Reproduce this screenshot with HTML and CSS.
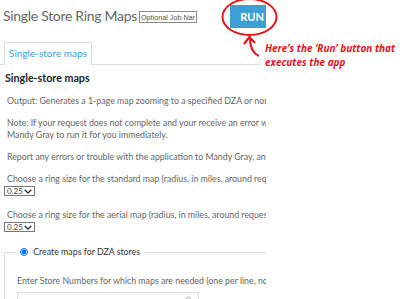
FILE: index.html
```html
<!DOCTYPE html>
<html lang="en">
<head>
    <meta charset="UTF-8">
    <title>Single Store Ring Maps</title>
    <link rel="stylesheet" href="styles.css">
</head>
<body>

<div class="app">
    <div class="app-header">
        <h1 class="app-title">Single Store Ring Maps</h1>
        <input type="text" class="job-name" placeholder="Optional Job Name" />
        <button class="run">RUN</button>
    </div>

    <div class="tabs">
        <div class="tab active">Single-store maps</div>
    </div>

    <div class="panel">
        <h2>Single-store maps</h2>
        <p>Output: Generates a 1-page map zooming to a specified DZA or non-DZA store location.</p>
        <p>Note: If your request does not complete and your receive an error with a reference number, please contact<br>Mandy Gray to run it for you immediately.</p>
        <p>Report any errors or trouble with the application to Mandy Gray, and include a screenshot.</p>
        <p class="label">Choose a ring size for the standard map (radius, in miles, around requested store)</p>
        <div class="ring">
            <select><option>0.25</option></select>
            <svg class="ring-arrow" width="8" height="5" viewBox="0 0 8 5"><path d="M0.7 0.7 L4 4 L7.3 0.7" fill="none" stroke="#333" stroke-width="1.3"/></svg>
        </div>
        <p class="label">Choose a ring size for the aerial map (radius, in miles, around requested store)</p>
        <div class="ring">
            <select><option>0.25</option></select>
            <svg class="ring-arrow" width="8" height="5" viewBox="0 0 8 5"><path d="M0.7 0.7 L4 4 L7.3 0.7" fill="none" stroke="#333" stroke-width="1.3"/></svg>
        </div>

        <fieldset class="stores">
            <legend><label><input type="radio" name="mode" checked /> Create maps for DZA stores</label></legend>
            <p>Enter Store Numbers for which maps are needed (one per line, no commas)</p>
            <div class="store-box">
                <textarea class="store-list"></textarea>
                <svg class="scroll-up" width="7" height="4" viewBox="0 0 7 4"><path d="M0.5 3.5 L3.5 0.7 L6.5 3.5" fill="none" stroke="#aaa" stroke-width="1"/></svg>
            </div>
        </fieldset>
    </div>
</div>

<!-- callout drawn over the screenshot -->
<div class="callout">
    <svg class="callout-mark" width="400" height="70" viewBox="0 0 400 70">
        <ellipse cx="249.5" cy="17" rx="27" ry="18" fill="none" stroke="#e8141c" stroke-width="2"/>
        <path d="M250 38 C250 47 252 53 259 56" fill="none" stroke="#e8141c" stroke-width="2.2"/>
        <path d="M244 44 L249.5 37 L255 43" fill="none" stroke="#e8141c" stroke-width="2.2"/>
    </svg>
    <div class="callout-text">Here’s the ‘Run’ button that<br>executes the app</div>
</div>

</body>
</html>
```

FILE: styles.css
```css
body {
    font-family: 'Lato', sans-serif;
    color: #666;
    background: #fff;
    margin: 0;
    overflow: hidden;
}

.app {
    width: 266px;
    height: 299px;
    overflow: hidden;
}

.app-header {
    display: flex;
    align-items: center;
    height: 31px;
    padding: 0 3px;
    white-space: nowrap;
}

.app-title {
    font-size: 14px;
    font-weight: normal;
    letter-spacing: -0.3px;
    margin: 0 2px 0 0;
}

.job-name {
    flex: none;
    font-family: 'Liberation Sans', Arial, sans-serif;
    font-size: 7.2px;
    width: 54px;
    height: 10px;
    padding: 0 1px;
    border: 1px solid #8a8a8a;
    margin-top: 3px;
}

.job-name::placeholder {
    color: #555;
}

.run {
    flex: none;
    font-family: 'Lato', sans-serif;
    font-weight: bold;
    font-size: 11px;
    color: #fff;
    background-color: #3d9fd4;
    border: none;
    width: 44px;
    height: 23px;
    margin-left: 33px;
    margin-top: 2px;
}

.tabs {
    display: flex;
    width: 256px;
    padding: 11px 0 0 4px;
    border-bottom: 1px solid #ddd;
}

.tab {
    font-size: 10px;
    color: #3aa0d8;
    padding: 4px 4px 5px;
    border: 1px solid #ddd;
    border-bottom: 1px solid #fff;
    margin-bottom: -1px;
    white-space: nowrap;
}

.panel {
    padding: 0 5px;
    width: 600px;
}

.panel h2 {
    font-size: 10.7px;
    line-height: 13px;
    font-weight: bold;
    color: #222;
    margin: 6px 0 11px 0;
}

.panel p {
    font-size: 8.8px;
    line-height: 12px;
    margin: 0 0 10px 2px;
}

.panel p.label {
    margin-bottom: 1px;
}

.ring {
    position: relative;
    width: 31px;
    margin: 0 0 13px -1px;
}

.ring select {
    display: block;
    appearance: none;
    font-family: 'Lato', sans-serif;
    font-size: 8px;
    color: #444;
    width: 31px;
    height: 10px;
    line-height: 8px;
    padding: 0 0 0 2px;
    border: 1px solid #777;
    border-radius: 0;
    background: #fff;
}

.ring-arrow {
    position: absolute;
    right: 3px;
    top: 3px;
}

.stores {
    width: 257px;
    margin: 14px 0 0 -1px;
    padding: 0 0 0 12px;
    border: 1px solid #ddd;
    border-right: none;
    border-bottom: none;
}

.stores legend {
    font-size: 8.8px;
    line-height: 12px;
    color: #333;
    padding: 0 3px;
}

.stores legend input {
    width: 8px;
    height: 8px;
    margin: 0 3px 0 0;
    vertical-align: -1px;
}

.panel .stores p {
    margin: 17px 0 5px 0;
    white-space: nowrap;
}

.store-box {
    position: relative;
    width: 182px;
}

.store-list {
    display: block;
    width: 182px;
    height: 20px;
    box-sizing: border-box;
    border: 1px solid #ddd;
    resize: none;
}

.scroll-up {
    position: absolute;
    right: 7px;
    top: 4px;
}

.callout {
    position: absolute;
    left: 0;
    top: 0;
    width: 400px;
    height: 70px;
}

.callout-mark {
    position: absolute;
    left: 0;
    top: 0;
}

.callout-text {
    position: absolute;
    left: 265px;
    top: 41px;
    font-family: 'Open Sans', sans-serif;
    font-style: italic;
    font-weight: bold;
    font-size: 10px;
    line-height: 14px;
    color: #e8141c;
}
```
